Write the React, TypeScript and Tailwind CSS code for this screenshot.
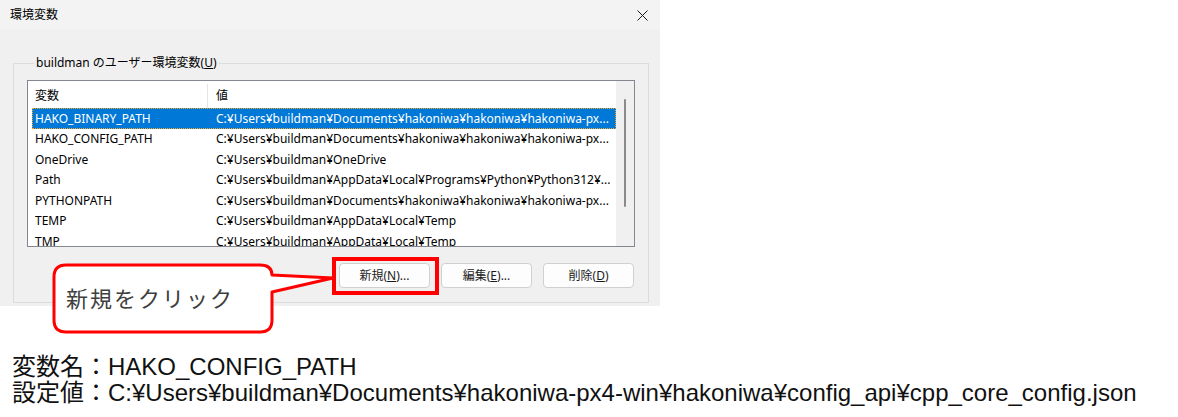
import React from 'react';

const rows = [
  { name: 'HAKO_BINARY_PATH', value: 'C:¥Users¥buildman¥Documents¥hakoniwa¥hakoniwa¥hakoniwa-px...', selected: true },
  { name: 'HAKO_CONFIG_PATH', value: 'C:¥Users¥buildman¥Documents¥hakoniwa¥hakoniwa¥hakoniwa-px...' },
  { name: 'OneDrive', value: 'C:¥Users¥buildman¥OneDrive' },
  { name: 'Path', value: 'C:¥Users¥buildman¥AppData¥Local¥Programs¥Python¥Python312¥...' },
  { name: 'PYTHONPATH', value: 'C:¥Users¥buildman¥Documents¥hakoniwa¥hakoniwa¥hakoniwa-px...' },
  { name: 'TEMP', value: 'C:¥Users¥buildman¥AppData¥Local¥Temp' },
  { name: 'TMP', value: 'C:¥Users¥buildman¥AppData¥Local¥Temp' },
];

const uiFont = "font-['Noto_Sans','Noto_Sans_CJK_JP',sans-serif]";

function DialogButton({ label, mnemonic, suffix }: { label: string; mnemonic: string; suffix: string }) {
  return (
    <button className="w-[91px] h-[25px] bg-[#fdfdfd] border border-[#d0d0d0] rounded-[4px] text-[12px] text-[#1b1b1b] flex items-center justify-center">
      {label}(<span className="underline">{mnemonic}</span>){suffix}
    </button>
  );
}

export default function App() {
  return (
    <div className="relative w-[1178px] h-[417px] bg-white overflow-hidden">
      {/* dialog capture */}
      <div className={`w-[660px] h-[306px] bg-[#f0f0f0] flex flex-col ${uiFont}`}>
        <div className="h-[30px] bg-[#f3f3f3] flex items-center justify-between pl-[10px] pr-[12px]">
          <span className="text-[12px] text-black">環境変数</span>
          <svg width="11" height="11" viewBox="0 0 11 11">
            <path d="M0.5 0.5 L10.5 10.5 M10.5 0.5 L0.5 10.5" stroke="#1a1a1a" strokeWidth="1" />
          </svg>
        </div>

        <fieldset className="ml-[13px] mt-[25px] w-[636px] h-[248px] border border-[#dcdcdc] pl-[13px] pr-[13px] pt-[9px]">
          <legend className="ml-[7px] px-[2px] text-[12px] leading-[16px] text-black">
            buildman のユーザー環境変数(<span className="underline">U</span>)
          </legend>

          <div className="w-[608px] h-[167px] border border-[#828790] bg-white flex">
            <div className="flex-1 overflow-hidden">
              <div className="h-[27px] flex items-center pt-[3px] text-[12px] text-black">
                <div className="w-[179px] pl-[7px]">変数</div>
                <div className="h-full w-px bg-[#e5e5e5]" />
                <div className="pl-[8px]">値</div>
              </div>
              {rows.map((row, i) => (
                <div
                  key={i}
                  className={`ml-[4px] h-[20.5px] flex items-center pt-[1px] text-[12px] whitespace-nowrap ${
                    row.selected ? 'bg-[#0078d7] text-white border border-dotted border-[#f5a623]' : 'text-black border border-transparent'
                  }`}
                >
                  <div className="w-[180px] pl-[2px] overflow-hidden">{row.name}</div>
                  <div className="pl-[3px] overflow-hidden">{row.value}</div>
                </div>
              ))}
            </div>
            <div className="w-[18px] bg-[#f0f0f0] flex justify-center pt-[18px]">
              <div className="w-[2px] h-[108px] bg-[#8a8a8a] rounded-full" />
            </div>
          </div>

          <div className="flex justify-end gap-[11px] mt-[16px] pr-[1px]">
            <DialogButton label="新規" mnemonic="N" suffix="..." />
            <DialogButton label="編集" mnemonic="E" suffix="..." />
            <DialogButton label="削除" mnemonic="D" suffix="" />
          </div>
        </fieldset>
      </div>

      {/* annotation text */}
      <div className="mt-[48px] pl-[12px] text-[24px] leading-[26px] text-[#111] font-['Liberation_Sans','Noto_Sans_CJK_JP',sans-serif]">
        <div>変数名：HAKO_CONFIG_PATH</div>
        <div>設定値：C:¥Users¥buildman¥Documents¥hakoniwa-px4-win¥hakoniwa¥config_api¥cpp_core_config.json</div>
      </div>

      {/* red highlight around the new button */}
      <div className="absolute left-[332px] top-[257px] w-[107px] h-[38px] border-4 border-[#ff0000]" />

      {/* callout */}
      <div className="absolute left-[50px] top-[260px] w-[290px] h-[78px]">
        <svg width="290" height="78" viewBox="0 0 290 78" className="absolute inset-0">
          <path
            d="M16 5 H210 Q222 5 222 15 L283 18 L222 32 V60 Q222 72 210 72 H16 Q4 72 4 60 V17 Q4 5 16 5 Z"
            fill="white"
            stroke="#ff0000"
            strokeWidth="3"
            strokeLinejoin="round"
          />
        </svg>
        <div className="absolute left-[16px] top-[24px] text-[22px] leading-[26px] tracking-[2px] text-[#404040] font-['Noto_Sans_CJK_JP',sans-serif]">
          新規をクリック
        </div>
      </div>
    </div>
  );
}
